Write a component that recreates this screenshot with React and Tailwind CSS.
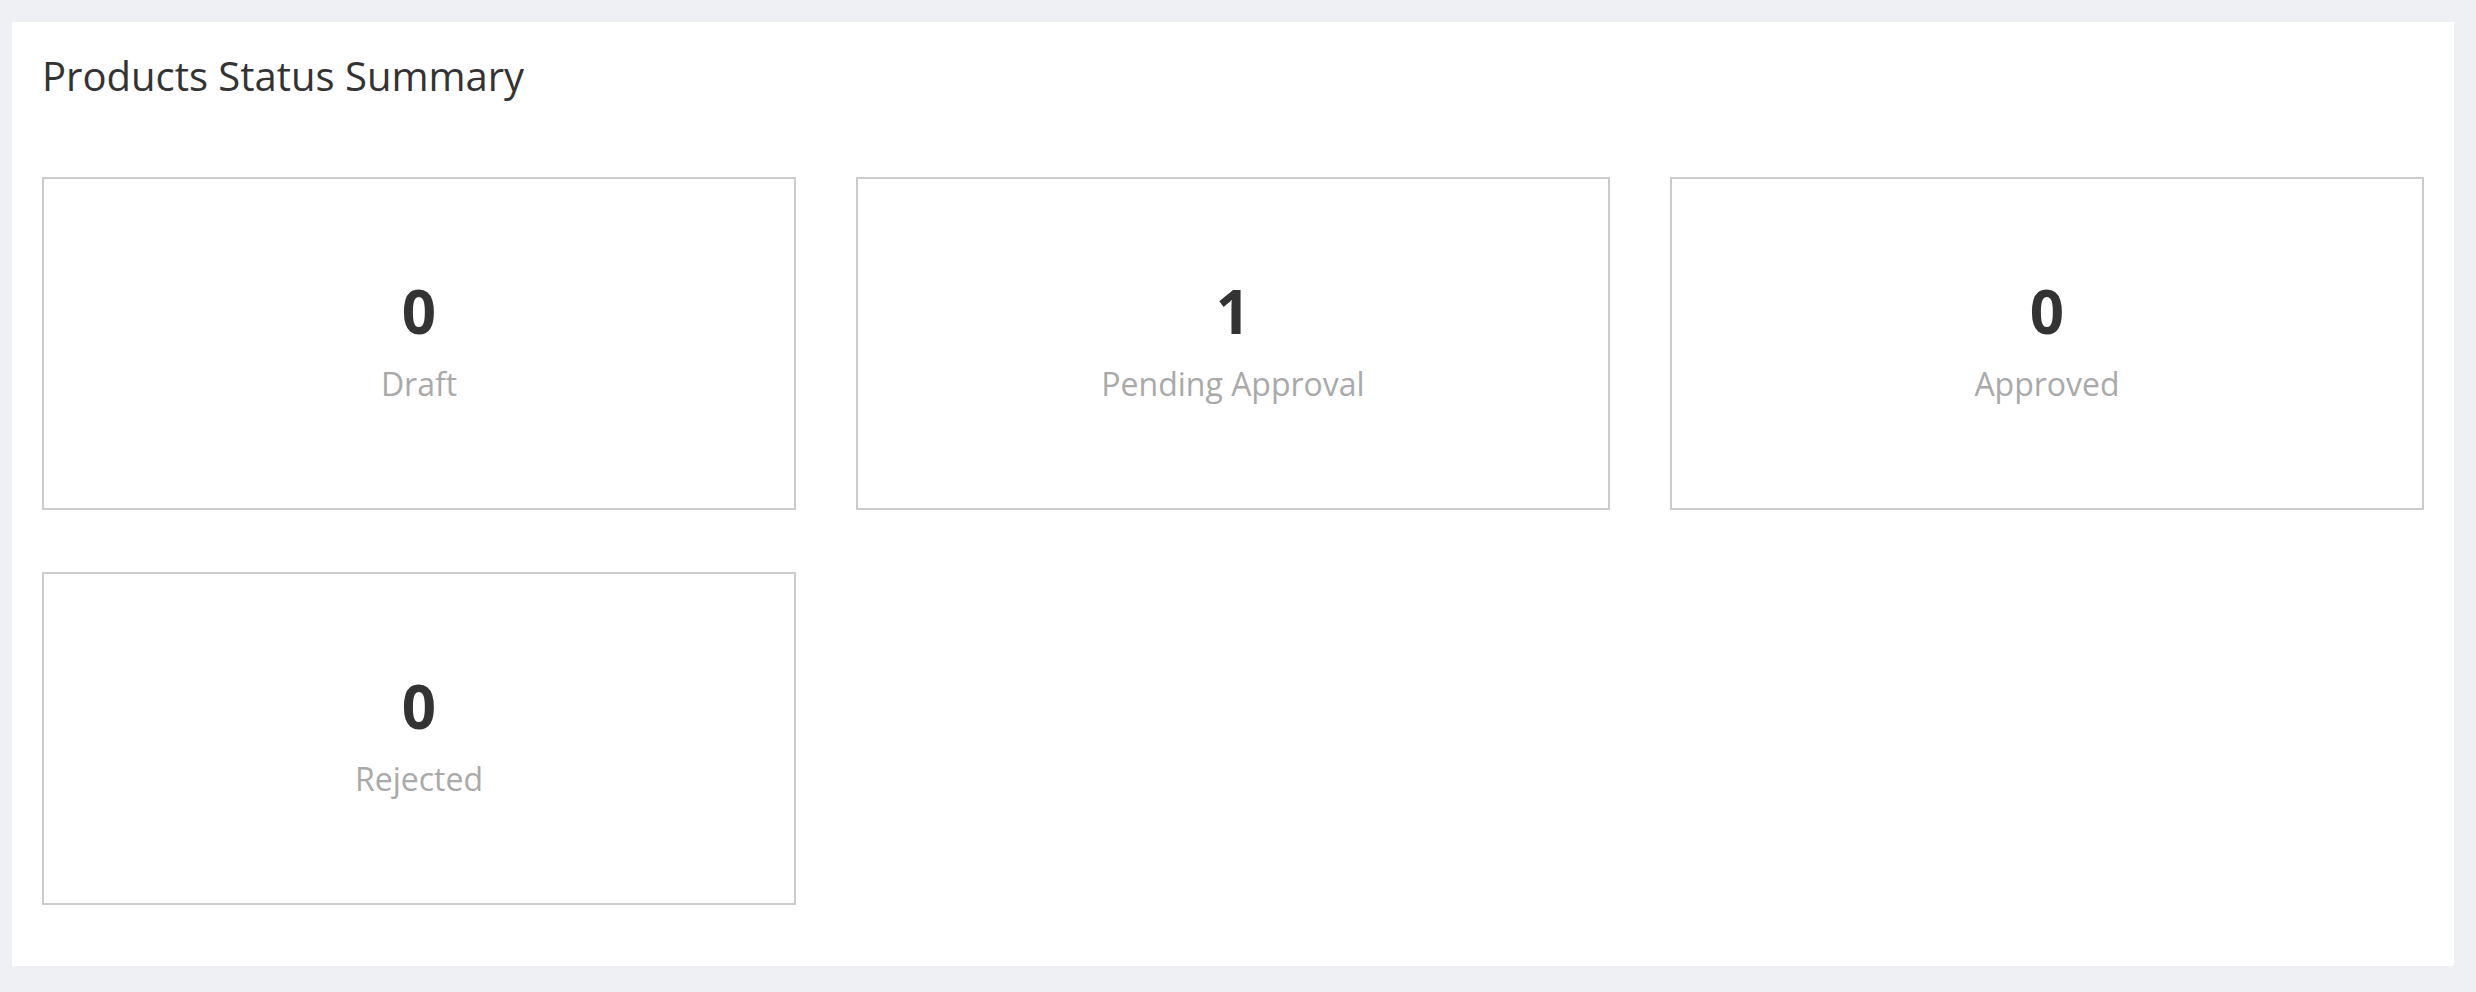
import React from "react";

const statuses = [
  { count: 0, label: "Draft" },
  { count: 1, label: "Pending Approval" },
  { count: 0, label: "Approved" },
  { count: 0, label: "Rejected" },
];

const StatusCard = ({ count, label }) => (
  <div className="h-[333px] border-2 border-[#cccccc] flex flex-col items-center justify-center pb-[6px]">
    <div className="text-[60px] leading-none font-bold text-[#333333]">{count}</div>
    <div className="mt-[27px] text-[32px] leading-none text-[#a9a9a9]">{label}</div>
  </div>
);

export default function App() {
  return (
    <div className="min-h-screen bg-[#eff0f4] pt-[22px] pl-[12px] pr-[22px] pb-[26px] font-['Open_Sans',sans-serif]">
      <div className="bg-white px-[30px] pt-[34px] pb-[61px]">
        <h2 className="text-[40px] leading-none text-[#333333]">Products Status Summary</h2>
        <div className="mt-[81px] grid grid-cols-3 gap-x-[60px] gap-y-[62px]">
          {statuses.map((s) => (
            <StatusCard key={s.label} count={s.count} label={s.label} />
          ))}
        </div>
      </div>
    </div>
  );
}
